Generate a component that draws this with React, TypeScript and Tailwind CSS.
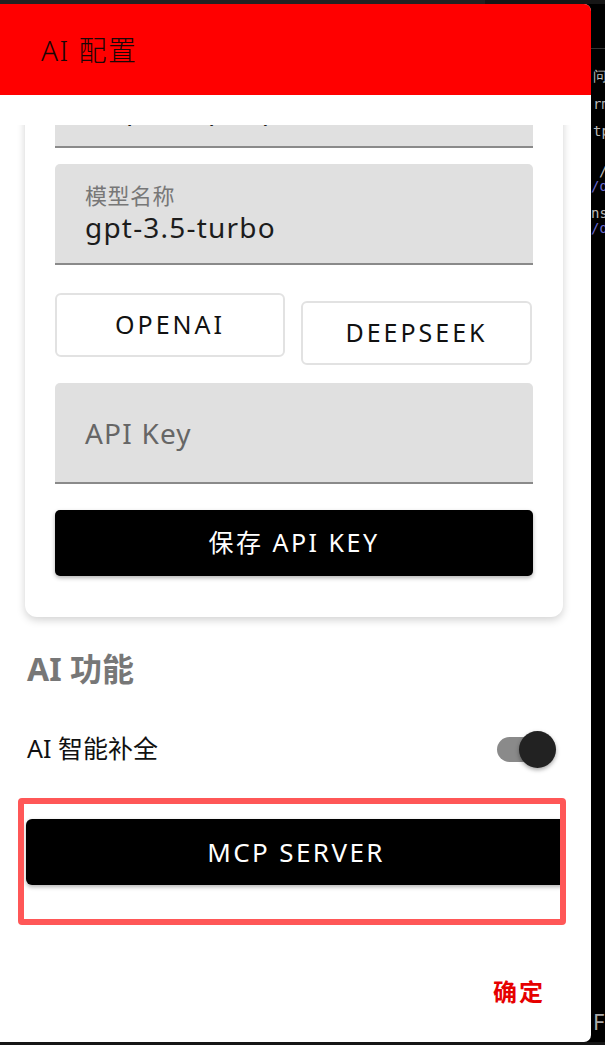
const font = "font-['Noto_Sans','Noto_Sans_CJK_SC',sans-serif]";

const Field = ({ label, value, placeholder }: { label?: string; value?: string; placeholder?: string }) => {
  return (
    <div className="h-[101px] w-full rounded-t-[5px] bg-[#e0e0e0] border-b-2 border-[#8a8a8a] px-[30px] flex flex-col justify-center">
      {label && <div className="text-[22px] leading-[26px] text-[#777] tracking-[0.5px]">{label}</div>}
      {value && <div className="text-[28px] leading-[38px] text-[#1c1c1c] tracking-[1.2px]">{value}</div>}
      {placeholder && <div className="text-[28px] leading-[38px] text-[#666] tracking-[1.2px]">{placeholder}</div>}
    </div>
  );
};

const Switch = () => {
  return (
    <div className="relative w-[59px] h-[37px] flex items-center">
      <div className="w-[51px] h-[25px] rounded-full bg-[#8a8a8a]" />
      <div className="absolute right-0 top-0 w-[37px] h-[37px] rounded-full bg-[#222] shadow-[0_2px_4px_rgba(0,0,0,0.35)]" />
    </div>
  );
};

export default function App() {
  return (
    <div className={`${font} w-[605px] h-[1045px] bg-black overflow-hidden flex flex-col`}>
      <div className="h-1 bg-[#161616] flex">
        <div className="w-[485px] bg-[#222]" />
      </div>

      <div className="flex h-[1038px]">
        {/* dialog */}
        <div className="w-[591px] h-full bg-white rounded-tr-[7px] rounded-br-[7px] overflow-hidden flex flex-col">
          <div className="h-[91px] bg-[#ff0000] pl-[41px] flex items-center shrink-0">
            <span className="text-[28px] font-light tracking-[1.5px] text-[#1a0606]">AI 配置</span>
          </div>

          <div className="h-[30px] shrink-0" />

          <div className="flex-1 overflow-hidden flex flex-col">
            {/* scrolled card */}
            <div className="-mt-[98px] ml-[25px] w-[538px] rounded-b-xl bg-white shadow-[0_3px_8px_rgba(0,0,0,0.18)] px-[30px] pt-5 pb-[41px] shrink-0">
              <div className="h-[101px] w-full rounded-t-[5px] bg-[#e0e0e0] border-b-2 border-[#8a8a8a] px-[30px] pt-[16px]">
                <div className="text-[22px] leading-[26px] text-[#777]">API 地址</div>
                <div className="text-[28px] leading-[38px] text-[#1c1c1c] tracking-[1.2px]">https://api.openai.com</div>
              </div>
              <div className="mt-4">
                <Field label="模型名称" value="gpt-3.5-turbo" />
              </div>
              <div className="mt-[28px] flex items-start gap-4">
                <button className="w-[230px] h-[64px] rounded-md border-2 border-[#e2e2e2] bg-white text-[25px] tracking-[3px] text-[#111]">
                  OPENAI
                </button>
                <button className="mt-2 w-[231px] h-[64px] rounded-md border-2 border-[#e2e2e2] bg-white text-[25px] tracking-[3px] text-[#111]">
                  DEEPSEEK
                </button>
              </div>
              <div className="mt-[18px]">
                <Field placeholder="API Key" />
              </div>
              <button className="mt-[26px] w-full h-[66px] rounded-[5px] bg-black text-white text-[25px] tracking-[2.5px] shadow-[0_2px_4px_rgba(0,0,0,0.3)]">
                保存 API KEY
              </button>
            </div>

            <div className="mt-[33px] pl-[27px] text-[32px] leading-[38px] font-bold text-[#777]">AI 功能</div>

            <div className="mt-[41px] pl-[27px] pr-[35px] h-10 flex items-center justify-between">
              <span className="text-[25px] text-[#111]">AI 智能补全</span>
              <Switch />
            </div>

            <div className="mt-[29px] ml-[18px] w-[548px] h-[127px] border-[6px] border-[#ff5757] rounded-[4px] pt-[15px] pl-[2px] overflow-hidden">
              <button className="w-[540px] h-[66px] rounded-[6px] bg-black text-white text-[26px] tracking-[2.4px] shadow-[0_2px_4px_rgba(0,0,0,0.3)]">
                MCP SERVER
              </button>
            </div>

            <div className="mt-[49px] pr-[46px] flex justify-end">
              <span className="text-[24px] font-bold text-[#e60000] tracking-[2px]">确定</span>
            </div>
          </div>
        </div>

        {/* terminal behind the dialog */}
        <div className="flex-1 relative overflow-hidden font-['DejaVu_Sans_Mono',monospace] text-[14px] leading-none text-[#bbb] whitespace-nowrap">
          <div className="mt-[44px] h-px bg-[#333]" />
          <div className="mt-[20px] pl-[2px]">问题</div>
          <div className="mt-[14px] pl-[2px]">rmat</div>
          <div className="mt-[13px] pl-[2px]">tps</div>
          <div className="mt-[26px] pl-[8px]">/c</div>
          <div className="mt-[1px] text-[#6a6ad0]">/da</div>
          <div className="mt-[13px]">ns</div>
          <div className="mt-[1px] text-[#6a6ad0]">/da</div>
          <div className="mt-[775px] pl-[2px] font-['Noto_Sans',sans-serif] text-[22px] text-[#aaa]">F</div>
        </div>
      </div>

      <div className="flex-1 bg-[#151515]" />
    </div>
  );
}
